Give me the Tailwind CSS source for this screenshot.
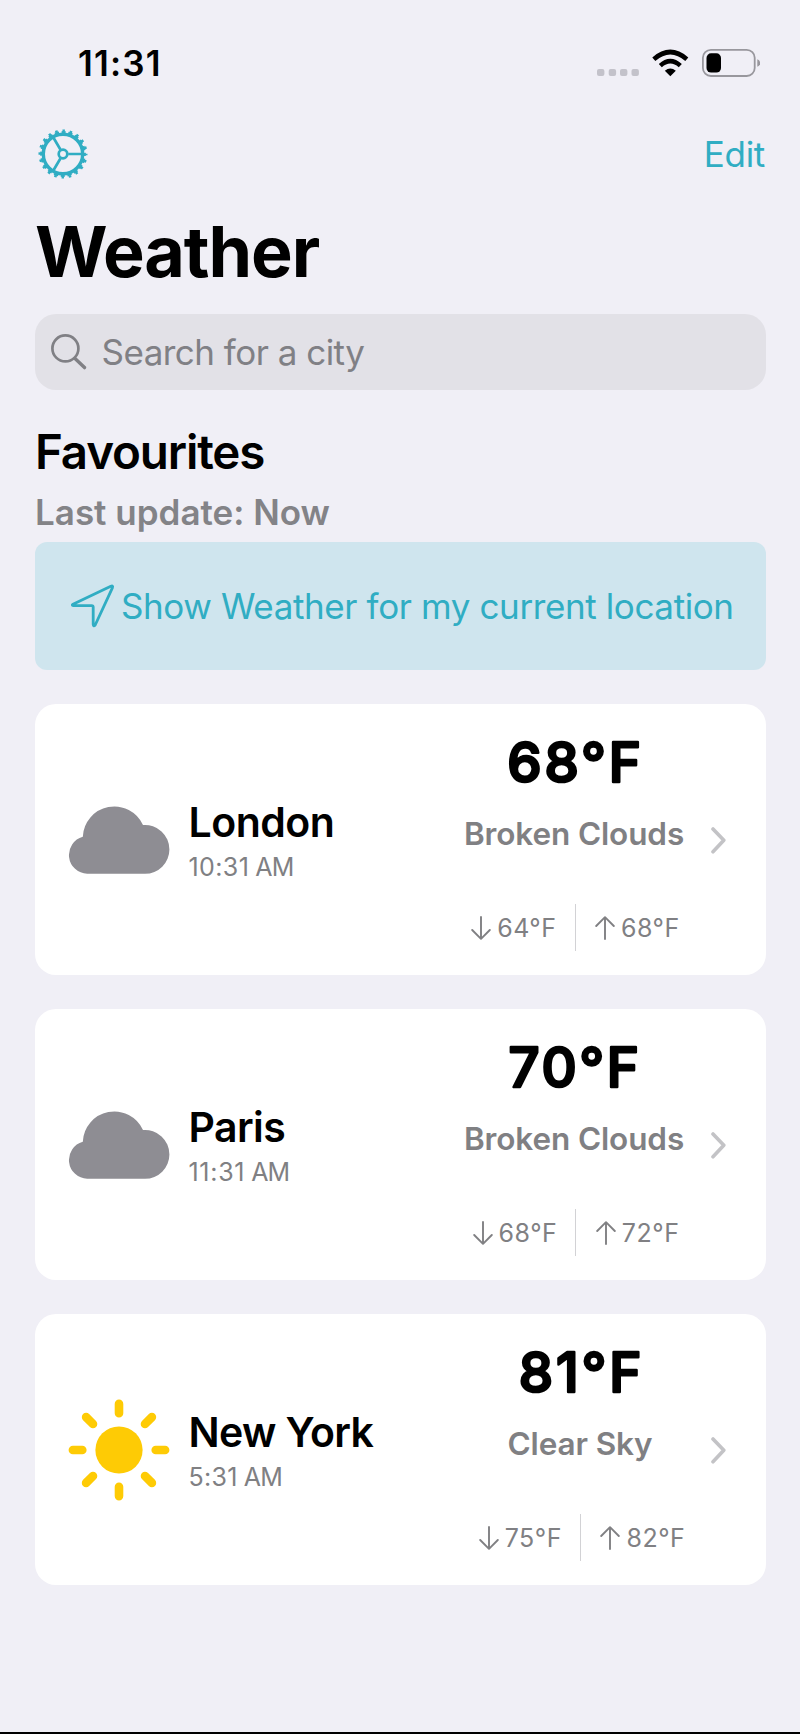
<!DOCTYPE html>
<html lang="en">
<head>
<meta charset="utf-8">
<title>Weather</title>
<script src="https://cdn.jsdelivr.net/npm/@tailwindcss/browser@4"></script>
</head>
<body class="bg-[#f0eff6] font-['Inter',sans-serif] text-black">
<svg class="hidden">
  <symbol id="cloud" viewBox="0 0 102 68"><path d="M19.2 67.8A18.9 18.9 0 0 1 14.8 30.7A31.5 31.5 0 0 1 75 19.1A24.4 24.4 0 0 1 101.4 43.4A24.4 24.4 0 0 1 77 67.8Z" fill="#8e8d93"/></symbol>
  <symbol id="sun" viewBox="-51 -51 102 102"><circle r="23.6" fill="#fecb05"/><path d="M0 -46.1V-36.7M0 46.1V36.7M-46.1 0H-36.7M46.1 0H36.7M-32.9 -32.9L-26 -26M32.9 -32.9L26 -26M-32.9 32.9L-26 26M32.9 32.9L26 26" stroke="#fecb05" stroke-width="8.6" stroke-linecap="round"/></symbol>
  <symbol id="down" viewBox="0 0 20 24"><path d="M10 1V22.6M1.2 14L10 22.8L18.8 14" fill="none" stroke="#808083" stroke-width="1.9" stroke-linecap="round" stroke-linejoin="round"/></symbol>
  <symbol id="up" viewBox="0 0 20 24"><path d="M10 23V1.4M1.2 10L10 1.2L18.8 10" fill="none" stroke="#808083" stroke-width="1.9" stroke-linecap="round" stroke-linejoin="round"/></symbol>
  <symbol id="chevron" viewBox="0 0 15 27"><path d="M2 2L12.8 13.3L2 24.8" fill="none" stroke="#c3c3c6" stroke-width="3.6" stroke-linecap="round" stroke-linejoin="round"/></symbol>
</svg>
<div class="w-[800px] h-[1734px] flex flex-col pl-[35px] pr-[34px] overflow-hidden border-b-2 border-black">
  <header class="h-[126px] shrink-0 flex items-center justify-between pl-[43px] pr-[6px]">
    <span class="text-[35px] font-semibold leading-none tracking-[1.15px]">11:31</span>
    <svg width="164" height="30" viewBox="596 48 164 30">
      <g fill="#c3c2ca"><rect x="597" y="69" width="7.4" height="7" rx="2"/><rect x="608.7" y="69" width="7.4" height="7" rx="2"/><rect x="620" y="69" width="7.4" height="7" rx="2"/><rect x="631.5" y="69" width="7.4" height="7" rx="2"/></g>
      <path d="M670.3 76.2 L664.8 70.7 Q670.3 66.5 675.8 70.7 Z"/>
      <path d="M660.3 65.6 Q670.3 56.7 680.3 65.6 M653.8 59.2 Q670.3 44.8 686.8 59.2" fill="none" stroke="#000" stroke-width="4.6"/>
      <rect x="702.9" y="49.8" width="51.8" height="26.2" rx="8" fill="none" stroke="#98979d" stroke-width="1.8"/>
      <rect x="706.5" y="53.3" width="14.5" height="19.2" rx="4.6"/>
      <path d="M757.3 59.2 Q760.2 60.4 760.2 63 Q760.2 65.6 757.3 66.8 Z" fill="#98979d"/>
    </svg>
  </header>
  <nav class="h-[56px] shrink-0 flex items-center justify-between pl-[3px] pr-px">
    <svg class="-mt-[1px]" width="50" height="50" viewBox="-25 -25 50 50" fill="none" stroke="#30adc3">
      <circle r="19.7" stroke-width="3.4"/>
      <circle r="21.8" stroke-width="2.2" stroke-dasharray="4.2 2.648" stroke-dashoffset="2.1"/>
      <circle r="23.4" stroke-width="2.2" stroke-dasharray="2.5 4.851" stroke-dashoffset="1.25"/>
      <circle r="4.3" stroke-width="2.7"/>
      <path d="M5.2 0H19M-2.6 -4.5L-9.8 -16.8M-2.6 4.5L-9.8 16.8" stroke-width="2.7"/>
    </svg>
    <span class="text-[35px] leading-none tracking-[-0.3px] text-[#30adc3]">Edit</span>
  </nav>
  <h1 class="mt-[35px] text-[70px] font-bold leading-[70px] tracking-[-1.1px] shrink-0">Weather</h1>
  <div class="mt-[27px] h-[76px] shrink-0 rounded-[21px] bg-[#e2e1e7] flex items-center pl-4">
    <svg width="36" height="36" viewBox="0 0 36 36" fill="none" stroke="#808085" stroke-width="2.7" stroke-linecap="round"><circle cx="14.4" cy="14.4" r="13"/><path d="M24 24.5L33.5 33.6" stroke-width="3.4"/></svg>
    <span class="ml-[14.5px] text-[35px] leading-none tracking-[-0.52px] text-[#808085]">Search for a city</span>
  </div>
  <h2 class="mt-[38px] text-[47.5px] leading-[48px] font-semibold tracking-[-1.15px] shrink-0">Favourites</h2>
  <p class="mt-[18px] text-[35px] leading-[36px] font-semibold text-[#838387] shrink-0">Last update: Now</p>
  <button class="mt-[12px] h-[128px] shrink-0 rounded-[12px] bg-[#cfe5ee] flex items-center pl-[35px] text-[#30adc3]">
    <svg width="46" height="46" viewBox="0 0 46 46" fill="none" stroke="#30adc3" stroke-width="2.8" stroke-linejoin="round"><path d="M3 21.3L40.8 3.3Q43.4 2.3 42.4 4.8L25.2 42Q23.4 44 23.2 41.4V24.2Q23.2 22.7 21.6 22.7L3.4 22.6Q1.4 22.2 3 21.3Z"/></svg>
    <span class="ml-[5px] text-[35px] leading-none tracking-[-0.39px] whitespace-nowrap">Show Weather for my current location</span>
  </button>

  <main class="mt-[34px] flex flex-col gap-[34px]">
    <section class="h-[271px] shrink-0 rounded-[21px] bg-white flex items-center pl-[33px] pr-[40px]">
      <svg width="102" height="68"><use href="#cloud"/></svg>
      <div class="ml-[18.5px] flex-1 flex flex-col gap-[6px]">
        <h3 class="text-[41px] leading-[48px] font-semibold tracking-[-0.5px]">London</h3>
        <p class="text-[25px] leading-[30px] text-[#808083] flex gap-[6px]"><span class="tracking-[0.4px]">10:31</span><span class="tracking-[-0.8px]">AM</span></p>
      </div>
      <div class="self-start pt-[21px] w-[230px] flex flex-col items-center">
        <svg width="200" height="72"><text x="101.5" y="56.5" text-anchor="middle" class="text-[54.5px] font-medium tracking-[2.9px]" stroke="#000" stroke-width="2.6" stroke-linejoin="round">68°F</text></svg>
        <p class="mt-[19px] text-[31.5px] leading-[36px] font-semibold tracking-[-0.12px] text-[#808083]">Broken Clouds</p>
        <div class="mt-[52px] pl-[3px] h-[47px] flex items-center text-[25px] leading-[30px] tracking-[0.5px] text-[#808083]">
          <svg class="mr-[6px]" width="20" height="24"><use href="#down"/></svg><span>64°F</span>
          <i class="ml-[18px] mr-[19.5px] w-px h-[47px] bg-[#d2d2d5]"></i>
          <svg class="mr-[6px]" width="20" height="24"><use href="#up"/></svg><span>68°F</span>
        </div>
      </div>
      <svg class="ml-[22px] mt-px" width="15" height="27"><use href="#chevron"/></svg>
    </section>

    <section class="h-[271px] shrink-0 rounded-[21px] bg-white flex items-center pl-[33px] pr-[40px]">
      <svg width="102" height="68"><use href="#cloud"/></svg>
      <div class="ml-[18.5px] flex-1 flex flex-col gap-[6px]">
        <h3 class="text-[41px] leading-[48px] font-semibold tracking-[-0.6px]">Paris</h3>
        <p class="text-[25px] leading-[30px] text-[#808083] flex gap-[6px]"><span class="tracking-[0.7px]">11:31</span><span class="tracking-[-0.8px]">AM</span></p>
      </div>
      <div class="self-start pt-[21px] w-[230px] flex flex-col items-center">
        <svg width="200" height="72"><text x="101" y="56.5" text-anchor="middle" class="text-[54.5px] font-medium tracking-[2.6px]" stroke="#000" stroke-width="2.6" stroke-linejoin="round">70°F</text></svg>
        <p class="mt-[19px] text-[31.5px] leading-[36px] font-semibold tracking-[-0.12px] text-[#808083]">Broken Clouds</p>
        <div class="mt-[52px] pl-[4px] h-[47px] flex items-center text-[25px] leading-[30px] tracking-[0.5px] text-[#808083]">
          <svg class="mr-[6px]" width="20" height="24"><use href="#down"/></svg><span>68°F</span>
          <i class="ml-[18px] mr-[19.5px] w-px h-[47px] bg-[#d2d2d5]"></i>
          <svg class="mr-[6px]" width="20" height="24"><use href="#up"/></svg><span>72°F</span>
        </div>
      </div>
      <svg class="ml-[22px] mt-px" width="15" height="27"><use href="#chevron"/></svg>
    </section>

    <section class="h-[271px] shrink-0 rounded-[21px] bg-white flex items-center pl-[33px] pr-[40px]">
      <svg width="102" height="102"><use href="#sun"/></svg>
      <div class="ml-[18.5px] flex-1 flex flex-col gap-[6px]">
        <h3 class="text-[41px] leading-[48px] font-semibold tracking-[-0.65px]">New York</h3>
        <p class="text-[25px] leading-[30px] text-[#808083] flex gap-[6px]"><span class="tracking-[0.3px]">5:31</span><span class="tracking-[-0.8px]">AM</span></p>
      </div>
      <div class="self-start pt-[21px] w-[218px] flex flex-col items-center">
        <svg width="200" height="72"><text x="101.5" y="56.5" text-anchor="middle" class="text-[54.5px] font-medium tracking-[2.9px]" stroke="#000" stroke-width="2.6" stroke-linejoin="round">81°F</text></svg>
        <p class="mt-[19px] text-[31.5px] leading-[36px] font-semibold tracking-[-0.12px] text-[#808083]">Clear Sky</p>
        <div class="mt-[52px] pl-[4px] h-[47px] flex items-center text-[25px] leading-[30px] tracking-[0.5px] text-[#808083]">
          <svg class="mr-[6px]" width="20" height="24"><use href="#down"/></svg><span>75°F</span>
          <i class="ml-[18px] mr-[19.5px] w-px h-[47px] bg-[#d2d2d5]"></i>
          <svg class="mr-[6px]" width="20" height="24"><use href="#up"/></svg><span>82°F</span>
        </div>
      </div>
      <svg class="ml-[22px] mt-px" width="15" height="27"><use href="#chevron"/></svg>
    </section>
  </main>
</div>
</body>
</html>
